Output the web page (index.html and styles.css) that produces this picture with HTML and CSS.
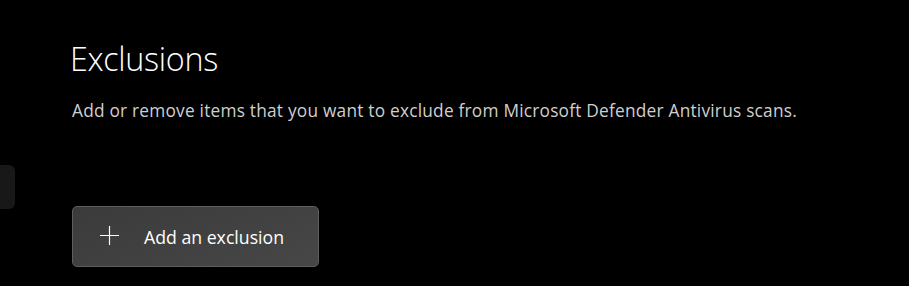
FILE: index.html
```html
<!DOCTYPE html>
<html>
<head>
<meta charset="utf-8">
<link rel="stylesheet" href="styles.css">
</head>
<body>
<div class="page">
  <div class="side-tab"></div>
  <main class="content">
    <h1 class="title">Exclusions</h1>
    <p class="desc">Add or remove items that you want to exclude from Microsoft Defender Antivirus scans.</p>
    <button class="add-btn" type="button">
      <svg class="plus" width="19" height="19" viewBox="0 0 19 19"><path d="M0 9.5H19M9.5 0V19" stroke="#fff" stroke-width="1.2" fill="none"/></svg>
      <span class="label">Add an exclusion</span>
    </button>
  </main>
</div>
</body>
</html>
```
FILE: styles.css
```css
html, body {
  margin: 0;
  padding: 0;
  background: #000;
  width: 909px;
  height: 286px;
  overflow: hidden;
}
.page {
  position: relative;
  height: 286px;
}
.side-tab {
  position: absolute;
  left: -10px;
  top: 165px;
  width: 25px;
  height: 44px;
  background: #181818;
  border-radius: 6px;
}
.content {
  padding-left: 72px;
  padding-top: 36px;
}
.title {
  margin: 0 0 0 -2px;
  font-family: "Open Sans", "Noto Sans", sans-serif;
  font-weight: 300;
  font-size: 32.3px;
  line-height: 44px;
  color: #fff;
  letter-spacing: -0.3px;
}
.desc {
  margin: 20px 0 0 0;
  font-family: "Open Sans", "Noto Sans", sans-serif;
  font-size: 17.3px;
  letter-spacing: 0.22px;
  line-height: 22px;
  color: #cfcfcf;
}
.add-btn {
  margin-top: 84px;
  width: 247px;
  height: 61px;
  display: flex;
  align-items: center;
  padding: 0 0 0 27px;
  box-sizing: border-box;
  border: 1px solid #5e5e5e;
  border-radius: 5px;
  background: linear-gradient(160deg, #3b3b3b 0%, #424242 60%, #474747 100%);
  cursor: pointer;
}
.plus {
  display: block;
  margin-top: -2px;
}
.label {
  margin-left: 25px;
  font-family: "Open Sans", "Noto Sans", sans-serif;
  font-size: 17.7px;
  color: #fff;
}
```
